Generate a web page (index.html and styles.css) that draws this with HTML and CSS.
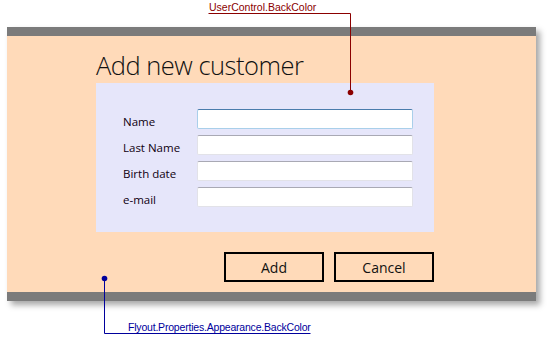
FILE: index.html
```html
<!DOCTYPE html>
<html lang="en">
<head>
  <meta charset="UTF-8">
  <title>Add new customer</title>
  <link rel="stylesheet" href="styles.css">
</head>
<body>
  <div class="page">
    <div class="flyout">
      <div class="content">
        <h1 class="title">Add new customer</h1>
        <div class="panel">
          <label class="lbl">Name</label>
          <input class="field focused" type="text">
          <label class="lbl">Last Name</label>
          <input class="field" type="text">
          <label class="lbl">Birth date</label>
          <input class="field" type="text">
          <label class="lbl">e-mail</label>
          <input class="field" type="text">
        </div>
        <div class="buttons">
          <button class="btn">Add</button>
          <button class="btn">Cancel</button>
        </div>
      </div>
    </div>

    <!-- callouts -->
    <span class="note note-top">UserControl.BackColor</span>
    <span class="note note-bottom">Flyout.Properties.Appearance.BackColor</span>
    <svg class="callouts" width="556" height="337" viewBox="0 0 556 337">
      <polyline points="208.5,13.5 350.5,13.5 350.5,92" fill="none" stroke="#8b0000" stroke-width="1"/>
      <circle cx="350.5" cy="92.5" r="2.8" fill="#8b0000"/>
      <polyline points="104.5,278 104.5,333.5 310.5,333.5" fill="none" stroke="#00009c" stroke-width="1"/>
      <circle cx="104.5" cy="278.5" r="2.8" fill="#00009c"/>
    </svg>
  </div>
</body>
</html>
```

FILE: styles.css
```css
body {
  margin: 0;
  background: #fff;
  font-family: "Open Sans", "Noto Sans", sans-serif;
}
.page {
  position: relative;
  width: 556px;
  height: 337px;
  padding-top: 27px;
  box-sizing: border-box;
}
.flyout {
  margin-left: 7px;
  width: 529px;
  height: 274px;
  box-sizing: border-box;
  background: #ffdab9;
  border-top: 9px solid #7b7b7b;
  border-bottom: 9px solid #7b7b7b;
  box-shadow: 4px 4px 6px rgba(0, 0, 0, 0.35);
}
.content {
  width: 338px;
  margin-left: 89px;
}
.title {
  margin: 0;
  height: 47px;
  padding-top: 14px;
  box-sizing: border-box;
  font-family: "Open Sans", sans-serif;
  font-weight: 300;
  font-size: 25.5px;
  line-height: 30px;
  color: #111;
  letter-spacing: -0.5px;
}
.panel {
  background: #e6e6fa;
  height: 149px;
  box-sizing: border-box;
  padding: 26px 21px 0 27px;
  display: grid;
  grid-template-columns: 74px 216px;
  grid-auto-rows: 20px;
  row-gap: 6px;
  align-items: center;
}
.lbl {
  font-size: 11.5px;
  color: #100010;
  padding-top: 4px;
}
.field {
  margin: 0;
  height: 20px;
  box-sizing: border-box;
  background: #fff;
  border: 1px solid #e2e2e8;
  border-top-color: #a9a9b4;
  border-radius: 2px;
  outline: none;
}
.field.focused {
  border-color: #a9cfea;
  border-top-color: #4a7cac;
}
.buttons {
  display: flex;
  justify-content: flex-end;
  gap: 10px;
  margin-top: 20px;
}
.btn {
  width: 100px;
  height: 30px;
  background: #ffdab9;
  border: 2px solid #000;
  font-family: "Open Sans", sans-serif;
  font-size: 14px;
  color: #111;
  padding: 0;
}
.note {
  position: absolute;
  font-family: "Liberation Sans", sans-serif;
  font-size: 10.5px;
  line-height: 12px;
  white-space: nowrap;
}
.note-top {
  left: 209px;
  top: 1px;
  color: #8b0000;
}
.note-bottom {
  left: 128px;
  top: 321px;
  color: #00009c;
  letter-spacing: -0.2px;
}
.callouts {
  position: absolute;
  left: 0;
  top: 0;
  pointer-events: none;
}
```
